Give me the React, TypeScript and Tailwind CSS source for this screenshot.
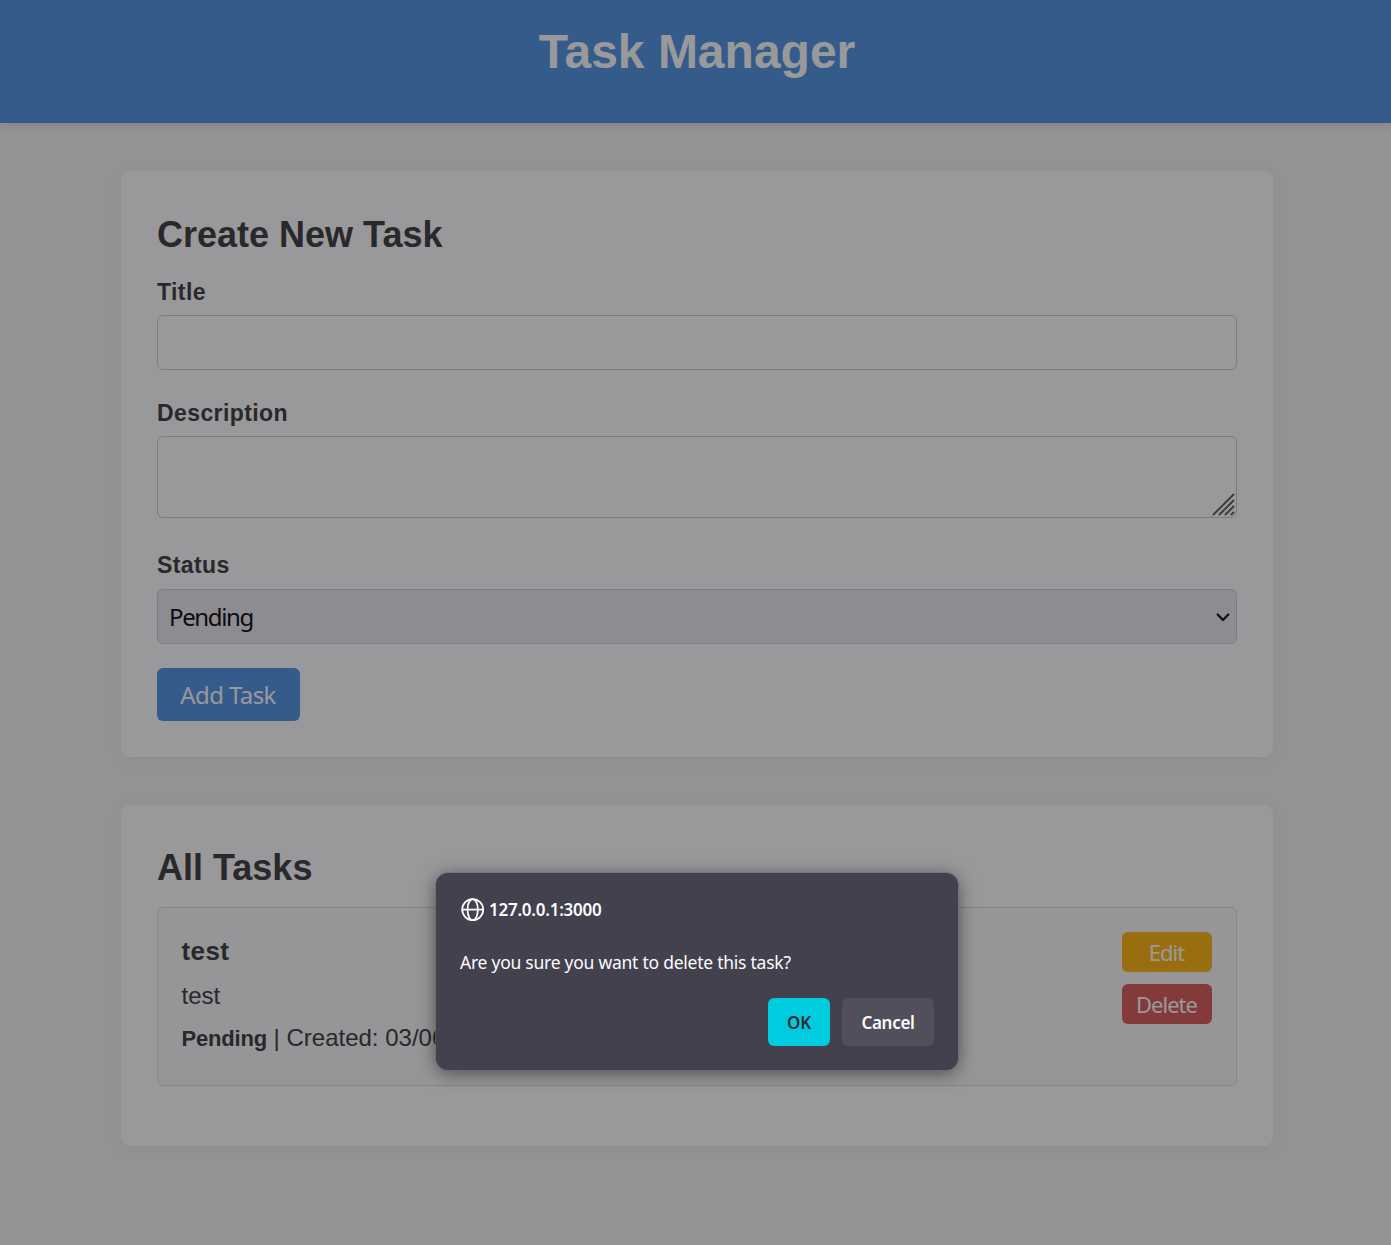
import React from 'react';

function Label({ children, className }: { children: React.ReactNode; className: string }) {
  return <label className={`block text-[23px] font-bold leading-[26px] tracking-[0.4px] ${className}`}>{children}</label>;
}

function ResizeGrip() {
  return (
    <svg className="absolute right-0 bottom-[1px]" width="24" height="24" viewBox="0 0 24 24" fill="none" stroke="#555" strokeWidth="1.9" strokeLinecap="round">
      <path d="M1.5 22.5 21.5 2.5M7.5 22.5 21.5 8.5M13.5 22.5 21.5 14.5M19.5 22.5 21.5 20.5" />
    </svg>
  );
}

function Globe() {
  return (
    <svg width="24" height="24" viewBox="0 0 24 24" fill="none" stroke="#fbfbfe" strokeWidth="1.8">
      <circle cx="11.700" cy="12.600" r="10.5" />
      <ellipse cx="11.700" cy="12.600" rx="5.2" ry="10.5" />
      <path d="M1.200 12.600h21" />
    </svg>
  );
}

function CreateTask() {
  return (
    <section className="h-[586px] rounded-[9px] bg-white px-9 pt-[43px] shadow-[0_3px_15px_rgba(0,0,0,0.05)]">
      <h2 className="text-[36px] font-bold leading-[42px]">Create New Task</h2>
      <Label className="mt-[23px]">Title</Label>
      <div className="mt-[10px] h-[55px] rounded-[6px] border border-[#ccc]" />
      <Label className="mt-[30px]">Description</Label>
      <div className="relative mt-[10px] h-[82px] rounded-[6px] border border-[#ccc]">
        <ResizeGrip />
      </div>
      <Label className="mt-[34px]">Status</Label>
      <div className="mt-[11px] flex h-[55px] items-center justify-between rounded-[6px] border border-[#ccc] bg-[#e9e9ed] pr-[6.5px] pl-[11px] font-['Noto_Sans'] text-[24px] text-black">
        <span className="tracking-[-1.35px]">Pending</span>
        <svg width="14" height="10" viewBox="0 0 14 10" fill="none" stroke="#000" strokeWidth="2.2" strokeLinecap="round" strokeLinejoin="round">
          <path d="m1.7 2.500 5.300 5.500L12.300 2.500" />
        </svg>
      </div>
      <button className="mt-6 h-[53px] w-[143px] rounded-[6px] bg-[#4a90e2] pr-[1px] font-['Noto_Sans'] text-[24px] tracking-[-0.6px] text-white">Add Task</button>
    </section>
  );
}

function AllTasks() {
  return (
    <section className="mt-12 h-[341px] rounded-[9px] bg-white px-9 pt-[42px] shadow-[0_3px_15px_rgba(0,0,0,0.05)]">
      <h2 className="text-[36px] font-bold leading-[42px]">All Tasks</h2>
      <article className="mt-[18px] flex h-[179px] justify-between rounded-[6px] border border-[#ddd] bg-[#f9f9f9] py-6 pr-6 pl-[23.5px]">
        <div className="pt-[3px]">
          <h3 className="text-[26px] font-bold leading-[32px] tracking-[0.4px]">test</h3>
          <p className="mt-[15px] text-[24px] leading-[28px]">test</p>
          <p className="mt-[14px] text-[24px] leading-[28px]"><strong className="text-[22px] tracking-[-0.2px]">Pending</strong> | Created: 03/06/2025</p>
        </div>
        <div className="flex flex-col gap-3 font-['Noto_Sans'] text-[22px] tracking-[-1px] text-white">
          <button className="h-10 w-[90px] rounded-[6px] bg-[#ffb300] pr-[1px]">Edit</button>
          <button className="h-10 w-[90px] rounded-[6px] bg-[#d9534f] pr-[1px]">Delete</button>
        </div>
      </article>
    </section>
  );
}

function ConfirmDialog() {
  return (
    <div role="dialog" className="absolute top-[873px] left-[436px] flex h-[197px] w-[522px] flex-col rounded-[12px] bg-[#42414d] p-6 font-['Noto_Sans'] text-[#fbfbfe] shadow-[0_0_0_1px_rgba(110,110,115,0.6),0_3px_18px_rgba(0,0,0,0.5)]">
      <div className="flex h-6 items-center gap-1 pl-[1px] text-[17px] font-semibold tracking-[-0.25px]">
        <Globe />
        <span className="pt-[2px]">127.0.0.1:3000</span>
      </div>
      <p className="mt-7 text-[17.5px] leading-[26px] tracking-[-0.25px]">Are you sure you want to delete this task?</p>
      <div className="mt-auto flex justify-end gap-3 text-[17px] font-semibold tracking-[-0.3px]">
        <button className="h-12 w-[62px] rounded-[6px] bg-[#00ccdf] pt-[2px] text-[#2b2a33]">OK</button>
        <button className="h-12 w-[92px] rounded-[6px] bg-[#504f5b] pt-[2px]">Cancel</button>
      </div>
    </div>
  );
}

export default function App() {
  return (
    <div className="relative h-[1245px] w-full overflow-hidden">
      <div className="h-full w-[1394px] bg-[#f4f4f4] font-['Liberation_Sans',sans-serif] text-[#333]">
        <header className="h-[123px] bg-[#4a90e2] pt-[25px] text-center text-white shadow-[0_3px_8px_rgba(0,0,0,0.1)]">
          <h1 className="text-[48px] font-bold leading-[54px]">Task Manager</h1>
        </header>
        <main className="mx-auto mt-12 w-[1152px]">
          <CreateTask />
          <AllTasks />
        </main>
      </div>
      <div className="absolute inset-0 bg-[rgba(28,27,34,0.45)]" />
      <ConfirmDialog />
    </div>
  );
}
